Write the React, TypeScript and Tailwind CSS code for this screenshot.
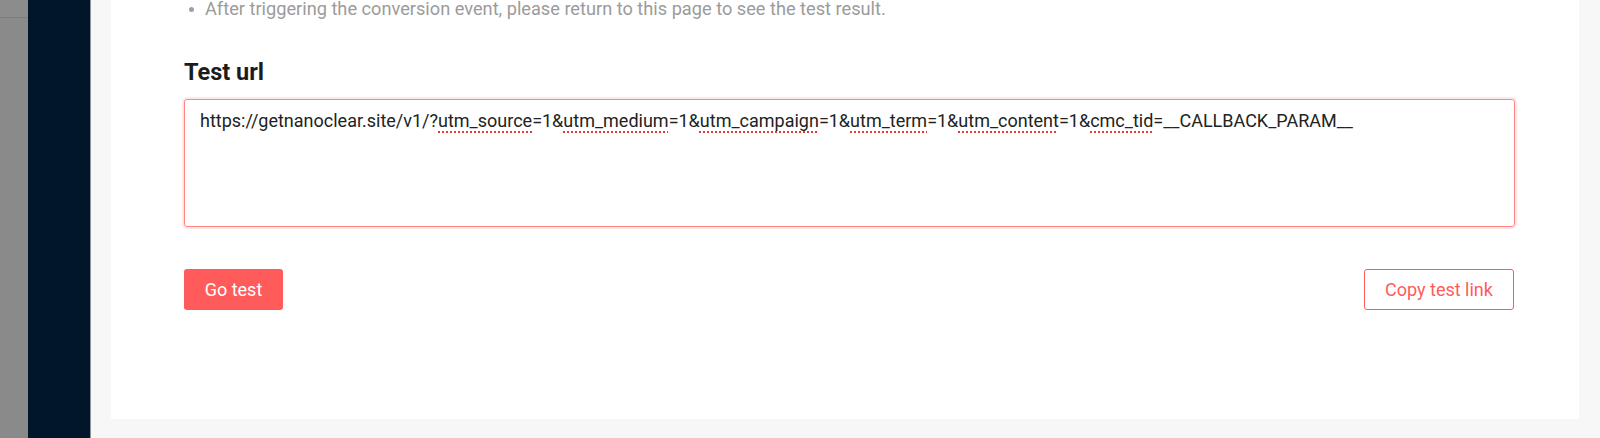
import React from "react";

const font = { fontFamily: "Roboto, 'Noto Sans', sans-serif" };

function Miss({ children }: { children: React.ReactNode }) {
  return (
    <span className="underline decoration-dotted decoration-[#e53935] decoration-[1.5px] underline-offset-[4px]">
      {children}
    </span>
  );
}

export default function App() {
  return (
    <div className="flex h-[438px] w-[1600px] overflow-hidden bg-[#f7f7f7]" style={font}>
      <div className="flex w-[28px] shrink-0 flex-col bg-[#8a8a8a]">
        <div className="h-[18px] border-b border-[#7e7e7e] bg-[#8c8c8c]" />
      </div>
      <div className="w-[63px] shrink-0 border-r border-[#8d939a] bg-[#011628]" />
      <div className="flex flex-1 flex-col justify-end pb-[19px] pl-[20px] pr-[21px]">
        <div className="flex flex-col bg-white pb-[109px] pl-[73px] pr-[64px]">
          <div className="flex h-[24px] items-center text-[18.2px] text-[#9b9b9b]">
            <span className="ml-[5px] mr-[11px] h-[5px] w-[5px] shrink-0 rounded-full bg-[#a0a0a0]" />
            <span className="whitespace-nowrap">After triggering the conversion event, please return to this page to see the test result.</span>
          </div>
          <div className="mt-[36px] h-[30px] text-[23.5px] font-bold leading-[30px] text-[#1c1c1c]">Test url</div>
          <div className="mt-[12px] h-[128px] rounded-[3px] border border-[#ff8585] px-[15px] pt-[7px] text-[18px] leading-[27px] text-[#222] shadow-[0_0_0_2px_rgba(255,91,91,0.14)]">
            <span className="whitespace-nowrap">
              {"https://getnanoclear.site/v1/?"}<Miss>utm_source</Miss>{"=1&"}<Miss>utm_medium</Miss>{"=1&"}<Miss>utm_campaign</Miss>{"=1&"}<Miss>utm_term</Miss>{"=1&"}<Miss>utm_content</Miss>{"=1&"}<Miss>cmc_tid</Miss>{"=__CALLBACK_PARAM__"}
            </span>
          </div>
          <div className="mt-[42px] flex items-center justify-between">
            <button className="flex h-[41px] w-[99px] items-center justify-center rounded-[3px] bg-[#ff5b5b] text-[18px] text-white">
              Go test
            </button>
            <button className="mr-[1px] flex h-[41px] w-[150px] items-center justify-center rounded-[3px] border border-[#ff5b5b] bg-white text-[18px] text-[#ff5b5b]">
              Copy test link
            </button>
          </div>
        </div>
      </div>
    </div>
  );
}
